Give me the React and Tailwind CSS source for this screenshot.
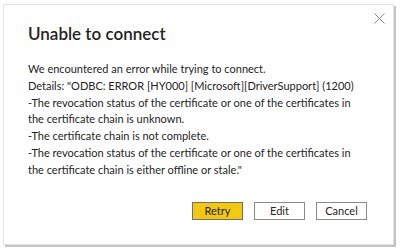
export default function App() {
  const lines = [
    "We encountered an error while trying to connect.",
    'Details: "ODBC: ERROR [HY000] [Microsoft][DriverSupport] (1200)',
    "-The revocation status of the certificate or one of the certificates in",
    "the certificate chain is unknown.",
    "-The certificate chain is not complete.",
    "-The revocation status of the certificate or one of the certificates in",
    'the certificate chain is either offline or stale."',
  ];
  return (
    <div className="w-[400px] h-[250px] bg-white pt-[4px] pl-[3px]" style={{ fontFamily: 'Lato, "Open Sans", sans-serif' }}>
      <div className="relative w-[391px] h-[241px] bg-white border border-[#e3e3e3] shadow-[2px_2px_0_#c4c4c4] flex flex-col">
        <svg className="absolute right-[8px] top-[8px]" width="11" height="11" viewBox="0 0 11 11">
          <path d="M0.5 0.5 L10.5 10.5 M10.5 0.5 L0.5 10.5" stroke="#8a8a8a" strokeWidth="1" fill="none" />
        </svg>
        <div className="pl-[24px] pt-[17px] text-[17px] leading-[24px] font-semibold text-[#252423]">Unable to connect</div>
        <div className="pl-[24px] pt-[15px] text-[11px] leading-[16.8px] text-[#252423]">
          {lines.map((l, i) => (
            <div key={i} className="whitespace-nowrap">{l}</div>
          ))}
        </div>
        <div className="flex justify-end gap-[11px] pr-[26px] mt-[23px]">
          <button className="w-[51px] h-[18px] bg-[#f2c811] border border-[#6f6f6f] text-[11px] leading-none text-[#252423]">Retry</button>
          <button className="w-[51px] h-[18px] bg-white border border-[#8a8a8a] text-[11px] leading-none text-[#252423]">Edit</button>
          <button className="w-[51px] h-[18px] bg-white border border-[#8a8a8a] text-[11px] leading-none text-[#252423]">Cancel</button>
        </div>
      </div>
    </div>
  );
}
